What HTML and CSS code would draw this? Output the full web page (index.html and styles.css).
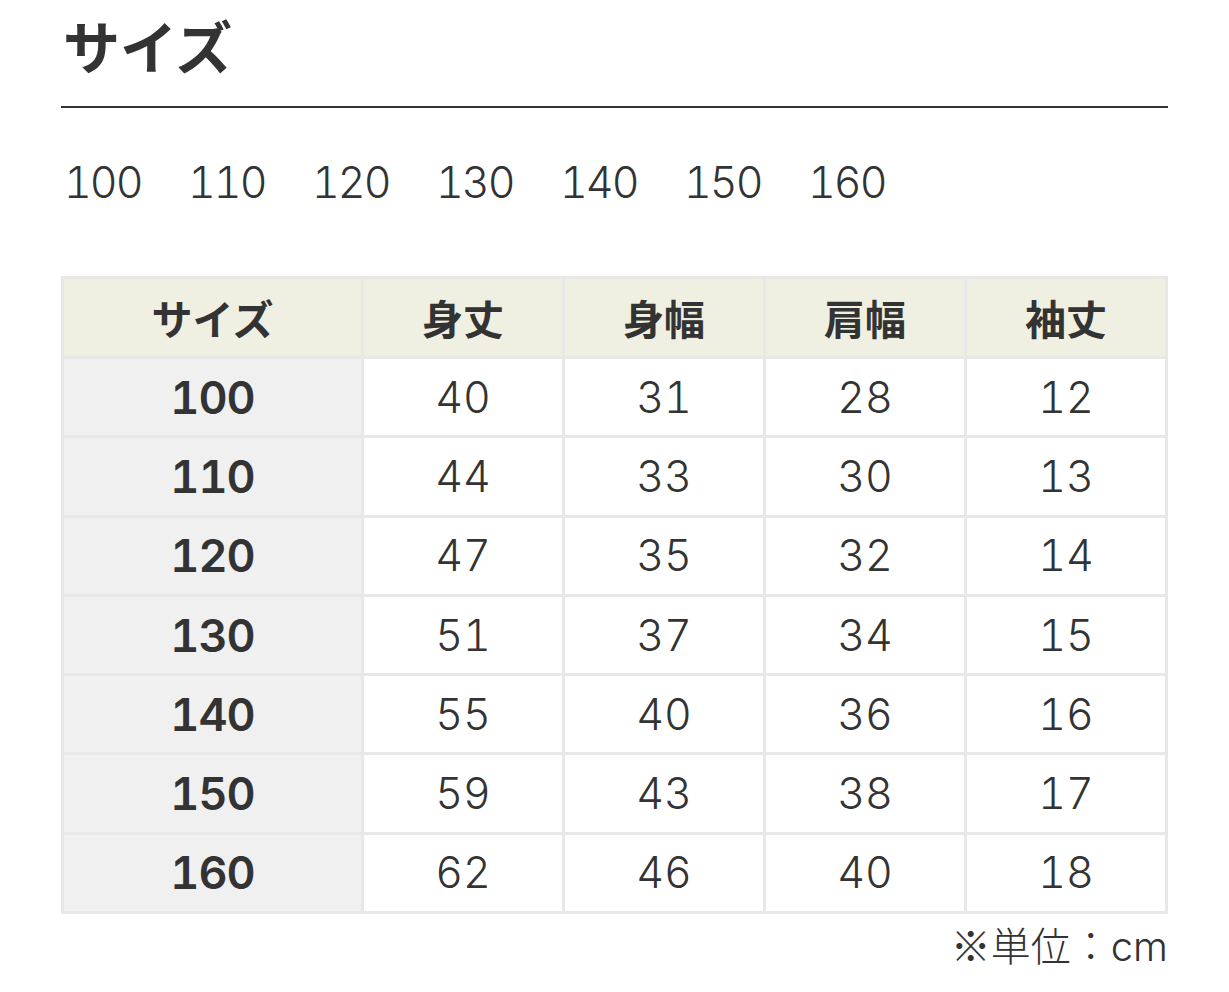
FILE: index.html
```html
<!DOCTYPE html>
<html lang="ja">
<head>
<meta charset="utf-8">
<link rel="stylesheet" href="styles.css">
</head>
<body>
<main class="page">
  <h1 class="title">サイズ</h1>
  <ul class="sizes">
    <li>100</li><li>110</li><li>120</li><li>130</li><li>140</li><li>150</li><li>160</li>
  </ul>
  <table class="chart">
    <thead>
      <tr><th>サイズ</th><th>身丈</th><th>身幅</th><th>肩幅</th><th>袖丈</th></tr>
    </thead>
    <tbody>
      <tr><th>100</th><td>40</td><td>31</td><td>28</td><td>12</td></tr>
      <tr><th>110</th><td>44</td><td>33</td><td>30</td><td>13</td></tr>
      <tr><th>120</th><td>47</td><td>35</td><td>32</td><td>14</td></tr>
      <tr><th>130</th><td>51</td><td>37</td><td>34</td><td>15</td></tr>
      <tr><th>140</th><td>55</td><td>40</td><td>36</td><td>16</td></tr>
      <tr><th>150</th><td>59</td><td>43</td><td>38</td><td>17</td></tr>
      <tr><th>160</th><td>62</td><td>46</td><td>40</td><td>18</td></tr>
    </tbody>
  </table>
  <p class="unit"><span class="jp">※単位：</span>cm</p>
</main>
</body>
</html>
```
FILE: styles.css
```css
* { box-sizing: border-box; }
html, body { margin: 0; padding: 0; background: #fff; }
body {
  font-family: "Inter", "Noto Sans CJK JP", sans-serif;
  font-variant-numeric: tabular-nums;
  color: #333;
}
.page {
  width: 1107px;
  margin-left: 61px;
  padding-top: 8px;
}
.title {
  margin: 0;
  font-family: "Noto Sans CJK JP", sans-serif;
  font-size: 57px;
  font-weight: 700;
  line-height: 72px;
  padding-left: 2px;
  padding-bottom: 26px;
  border-bottom: 2px solid #333;
}
.sizes {
  list-style: none;
  margin: 0;
  padding: 46px 0 0 3px;
  display: flex;
  gap: 50px;
  font-size: 43px;
  font-weight: 300;
  line-height: 56px;
  letter-spacing: -2px;
  color: #333;
}
.sizes li { width: 74px; white-space: nowrap; }
.chart {
  margin-top: 66px;
  width: 1107px;
  border-collapse: collapse;
  table-layout: fixed;
}
.chart th, .chart td {
  border: 3px solid #e8e8e8;
  text-align: center;
  height: 79.3px;
  padding: 0;
  font-size: 43px;
  line-height: 1;
}
.chart th:first-child { width: 300px; }
.chart thead th {
  font-family: "Noto Sans CJK JP", sans-serif;
  background: #efefe2;
  font-weight: 700;
  height: 80px;
  font-size: 41px;
}
.chart tbody th {
  background: #f0f0f0;
  font-weight: 600;
  font-size: 45px;
  letter-spacing: -1px;
}
.chart td {
  font-weight: 300;
  color: #333;
}
.unit {
  margin: 6px 0 0;
  text-align: right;
  font-size: 40px;
  font-weight: 300;
  line-height: 48px;
  color: #333;
}
.unit .jp {
  font-family: "Noto Sans CJK JP", sans-serif;
  font-weight: 300;
}
```
